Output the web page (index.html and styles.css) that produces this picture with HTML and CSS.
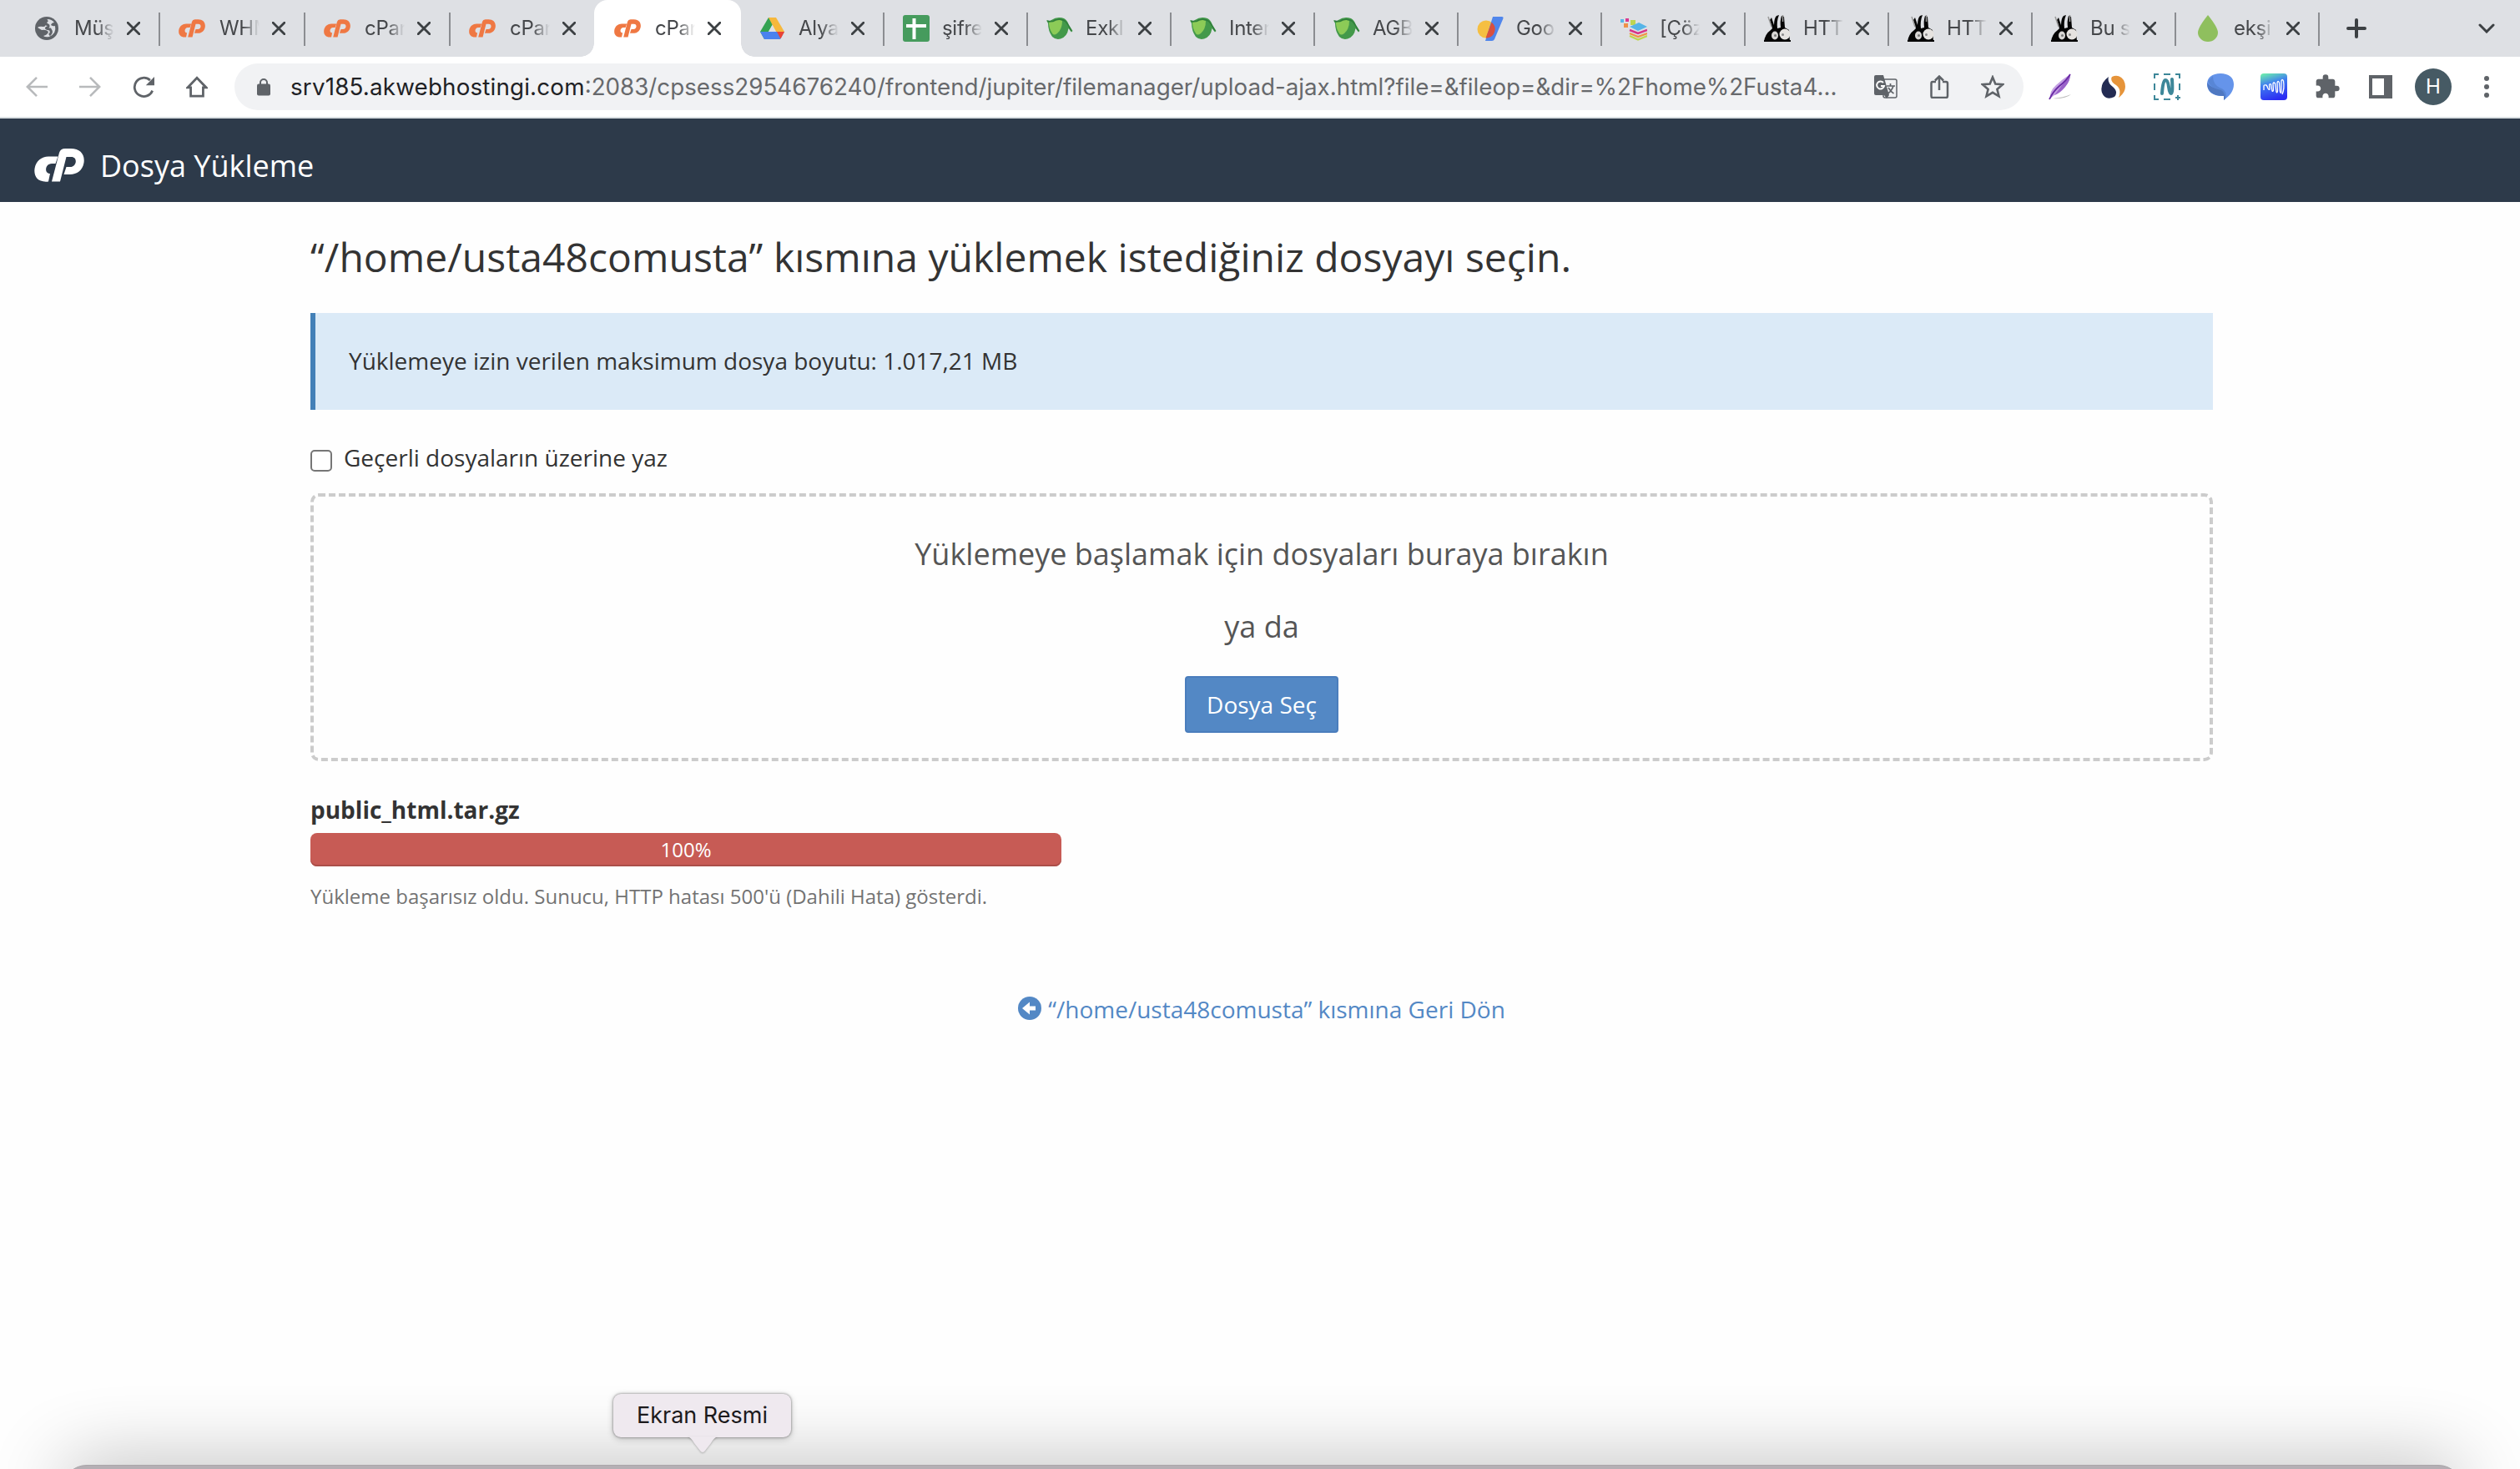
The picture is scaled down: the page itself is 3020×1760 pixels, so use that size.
FILE: index.html
```html
<!DOCTYPE html>
<html lang="tr">
<head>
<meta charset="utf-8">
<title>cPanel - Dosya Yükleme</title>
<link rel="stylesheet" href="styles.css">
</head>
<body>
<svg class="defs" aria-hidden="true">
  <symbol id="cp" viewBox="0 0 60 40">
    <path d="M22 9.500H28.500L25.500 18H21C13 18 11.500 30 19 30L17 39.500C4 41 -1 33 .6 23.500C2 15 9 9.500 17 9.500Z"/>
    <path d="M21 39.500L30 5Q31.500 0 37 0H44C55 0 61 7 59.500 17C58 26 51 31 43 31H35.500L38.500 22H43C51 22 52.500 10 44.500 10H38.500L31 39.500Z"/>
  </symbol>
  <symbol id="x" viewBox="0 0 16 16"><path d="M1.200 1.200 14.800 14.800M14.800 1.200 1.200 14.800" fill="none" stroke="#3c4043" stroke-width="2.800" stroke-linecap="round"/></symbol>
  <symbol id="leaf" viewBox="0 0 32 32">
    <path d="M0 6Q3 8 6 6Q13 1 21 4Q25 6 27 12L31.500 19L30 20.500L26.500 16Q25 26 17 28.500Q11 30 7 26Q2 19 2 10Z" fill="#43994a"/>
    <path d="M3 9Q11 3 19 7Q19 17 13 22Q9 25 7 22Q3 16 3 9Z" fill="#8ccb57"/>
    <path d="M1 7Q6 9 11 6Q17 4 22 7Q25 9 30 19" fill="none" stroke="#2f7d3a" stroke-width="1.500"/>
  </symbol>
  <symbol id="rabbit" viewBox="0 0 32 32">
    <path d="M0 32Q1 23 8 18L10 16L7 6 9 3 12 12Q12 4 15 1L18 0Q15 7 16 16L20 15Q19 7 21 1L24 2 25 15 30 18 31 32Z" fill="#050505"/>
    <path d="M5 2 9 14M22.500 0V8" stroke="#999" stroke-width="1.500"/>
    <ellipse cx="13" cy="24.500" rx="4" ry="5" fill="#d8d6d4"/><ellipse cx="25" cy="23" rx="6.500" ry="6.500" fill="#e6e3e0"/><circle cx="13.500" cy="24.500" r="1.500" fill="#777"/><circle cx="22.500" cy="23.500" r="1.500" fill="#888"/><path d="M0 31H32" stroke="#050505" stroke-width="2"/>
  </symbol>
</svg>

<nav class="tabs">
  <div class="tab"><svg class="fav" viewBox="0 0 32 32"><circle cx="16" cy="16" r="14" fill="#5f6368"/><path d="M17 5Q22 5 25 9Q22 9 21 12Q24 14 26 13Q28 22 19 26Q14 27 12 25Q17 24 18 20Q15 17 10 18L5 15Q7 13 12 14Q15 14 14 11Q13 7 17 5Z" fill="#dee0e4"/><path d="M17 6Q14 8 15 11Q20 12 17 15Q13 16 20 17Q23 21 19 24" fill="none" stroke="#5f6368" stroke-width="3"/></svg><span class="title">Müşt</span><svg class="close"><use href="#x"/></svg></div>
  <div class="tab"><svg class="fav cp"><use href="#cp"/></svg><span class="title">WHM</span><svg class="close"><use href="#x"/></svg></div>
  <div class="tab"><svg class="fav cp"><use href="#cp"/></svg><span class="title">cPan</span><svg class="close"><use href="#x"/></svg></div>
  <div class="tab plain"><svg class="fav cp"><use href="#cp"/></svg><span class="title">cPan</span><svg class="close"><use href="#x"/></svg></div>
  <div class="tab active"><svg class="fav cp"><use href="#cp"/></svg><span class="title">cPan</span><svg class="close"><use href="#x"/></svg></div>
  <div class="tab narrow"><svg class="fav" viewBox="0 0 32 32"><path d="M11 3 20 3 15.500 12 6 29 1 20Z" fill="#34a353"/><path d="M11 3H20L30 20H20Z" fill="#f6b83c"/><path d="M1 20H30L25 29H6Z" fill="#4a82ee"/><path d="M21 20H30L25.500 28.500Z" fill="#ea4335"/><path d="M15.500 12 20 20H11Z" fill="#dee0e4"/></svg><span class="title">Alya</span><svg class="close"><use href="#x"/></svg></div>
  <div class="tab narrow"><svg class="fav" viewBox="0 0 32 32"><rect width="32" height="32" rx="3" fill="#469b5d"/><path d="M4 13H28M13.500 4V29" stroke="#fff" stroke-width="4"/></svg><span class="title">şifre</span><svg class="close"><use href="#x"/></svg></div>
  <div class="tab narrow"><svg class="fav"><use href="#leaf"/></svg><span class="title">Exkl</span><svg class="close"><use href="#x"/></svg></div>
  <div class="tab narrow"><svg class="fav"><use href="#leaf"/></svg><span class="title">Inter</span><svg class="close"><use href="#x"/></svg></div>
  <div class="tab narrow"><svg class="fav"><use href="#leaf"/></svg><span class="title">AGB</span><svg class="close"><use href="#x"/></svg></div>
  <div class="tab narrow"><svg class="fav" viewBox="0 0 32 32"><circle cx="11" cy="17" r="10.500" fill="#f5bf42"/><path d="M19 2H30Q32 2 31.500 4L21 29Q20 31 18 31H10Z" fill="#5086ec"/><path d="M17.500 8.700A10.500 10.500 0 0 1 12 27.500H10.500Z" fill="#d9503f"/></svg><span class="title">Goo</span><svg class="close"><use href="#x"/></svg></div>
  <div class="tab narrow"><svg class="fav" viewBox="0 0 32 32"><path d="M0 5h4v4H0z" fill="#59b6ea"/><path d="M6 4h4v4H6z" fill="#d83a91"/><path d="M12 6h6v6h-6z" fill="#bfd552"/><path d="M4 10h5v5H4z" fill="#ef9249"/><path d="M11 14 22 9 32 14 21 19Z" fill="#56b4e8"/><path d="M11 18 21 22 32 18" fill="none" stroke="#d83489" stroke-width="2.500"/><path d="M11 22 21 26 32 22" fill="none" stroke="#f19245" stroke-width="2.200"/><path d="M11 25 21 29.500 32 25" fill="none" stroke="#bed750" stroke-width="2.200"/></svg><span class="title">[Çöz</span><svg class="close"><use href="#x"/></svg></div>
  <div class="tab narrow"><svg class="fav"><use href="#rabbit"/></svg><span class="title">HTT</span><svg class="close"><use href="#x"/></svg></div>
  <div class="tab narrow"><svg class="fav"><use href="#rabbit"/></svg><span class="title">HTT</span><svg class="close"><use href="#x"/></svg></div>
  <div class="tab narrow"><svg class="fav"><use href="#rabbit"/></svg><span class="title">Bu s</span><svg class="close"><use href="#x"/></svg></div>
  <div class="tab narrow"><svg class="fav" viewBox="0 0 32 32"><path d="M16 0Q28 15 28 21A12 11 0 0 1 4 21Q4 15 16 0Z" fill="#8fbf5e"/></svg><span class="title">ekşi</span><svg class="close"><use href="#x"/></svg></div>
  <svg class="plus" viewBox="0 0 24 24"><path d="M12 2V22M2 12H22" stroke="#3c4043" stroke-width="4" stroke-linecap="round"/></svg>
  <svg class="chev" viewBox="0 0 20 12"><path d="M2 2 10 10 18 2" fill="none" stroke="#3c4043" stroke-width="3" stroke-linecap="round"/></svg>
</nav>

<div class="toolbar">
  <svg class="nav" viewBox="0 0 28 28"><path d="M28 14H2M14 2 2 14 14 26" fill="none" stroke="#b8babc" stroke-width="2.800"/></svg>
  <svg class="nav" viewBox="0 0 28 28"><path d="M0 14H26M14 2 26 14 14 26" fill="none" stroke="#b8babc" stroke-width="2.800"/></svg>
  <svg class="nav" viewBox="0 0 28 28"><path d="M25.500 19A12 12 0 1 1 22.500 5.500" fill="none" stroke="#5f6368" stroke-width="3"/><path d="M28 1V12H17Z" fill="#5f6368"/></svg>
  <svg class="nav" viewBox="0 0 28 28"><path d="M2 15 14 2.500 26 15H22V26H6V15Z" fill="none" stroke="#5f6368" stroke-width="3"/></svg>
  <div class="omnibox">
    <svg class="lock" viewBox="0 0 16 22"><path d="M4 9V6a4 4 0 0 1 8 0V9" fill="none" stroke="#5f6368" stroke-width="2"/><rect y="7.500" width="16" height="14" rx="2" fill="#5f6368"/></svg>
    <span class="url"><b>srv185.akwebhostingi.com</b><span>:2083/cpsess2954676240/frontend/jupiter/filemanager/upload-ajax.html?file=&amp;fileop=&amp;dir=%2Fhome%2Fusta4...</span></span>
    <svg class="act" viewBox="0 0 28 28"><rect x="11" y="5" width="16" height="22" rx="2" fill="none" stroke="#5f6368" stroke-width="1.500"/><path d="M2 0H11L18 24H2Q0 24 0 22V2Q0 0 2 0Z" fill="#5f6368"/><path d="M12 24H18L15 28Z" fill="#5f6368"/><path d="M11 9A4.500 4.500 0 1 0 12 13H8" fill="none" stroke="#fff" stroke-width="2"/><path d="M15 13H25M19.500 10V13M23 13Q21 19 16.500 22M17 15Q20 20 23.500 22" fill="none" stroke="#5f6368" stroke-width="1.700"/></svg>
    <svg class="act" viewBox="0 0 28 28"><path d="M10 8H6Q4.500 8 4.500 10V25Q4.500 27 6 27H22Q24 27 24 25V10Q24 8 22 8H18M14 18V2M9 6.500 14 1.500 19 6.500" fill="none" stroke="#5f6368" stroke-width="2.500"/></svg>
    <svg class="act" viewBox="0 0 28 28"><path d="M14 2.500 17.300 10.500 26 11.200 19.400 16.900 21.500 25.300 14 20.800 6.500 25.300 8.600 16.900 2 11.200 10.700 10.500Z" fill="none" stroke="#5f6368" stroke-width="2.600"/></svg>
  </div>
  <svg class="ext" viewBox="0 0 32 32"><path d="M4 30Q3 21 11 14Q18 7 28 1Q28 9 22 16Q16 24 9 26Z" fill="#c3a0e2"/><path d="M9 26Q16 23 22 16Q28 9 28 1L16 17Z" fill="#9a63c9"/><path d="M3 31Q7 22 15 15Q23 9 28 1" fill="none" stroke="#692aa5" stroke-width="1.800"/><path d="M7 30Q20 29 29 25Q22 31 7 30Z" fill="#bbb"/></svg>
  <svg class="ext" viewBox="0 0 32 32"><path d="M10 4Q8 11 15 16Q22 22 17 28Q6 33 2 23Q-1 12 10 4Z" fill="#232b52"/><path d="M14 4Q22 0 28 8Q34 20 22 29Q26 19 19 14Q11 9 14 4Z" fill="#e6943a"/></svg>
  <svg class="ext" viewBox="0 0 32 32"><path d="M1 6V1H6M12 1H20M26 1H31V6M1 12V20M31 12V20M1 26V31H6M12 31H20M29 26V32M26 29H32" fill="none" stroke="#3d8799" stroke-width="2"/><path d="M10 24Q11 8 14 8Q17 8 18 16Q19 24 21 24Q23 24 22 7" fill="none" stroke="#3d8799" stroke-width="4" stroke-linecap="round"/></svg>
  <svg class="ext" viewBox="0 0 32 32"><path d="M16 0C26 0 32 5 32 13C32 21 27 27 20 32L20 27C8 28 0 22 0 13C0 5 6 0 16 0Z" fill="#6594ea"/><path d="M0 11Q5 18 14 18Q24 20 22 30L20 32V27C6 27 0 21 0 11Z" fill="#4f78c1"/><path d="M7 3Q7 13 15 17Q22 19 23 26L21 30Q22 20 13 19Q4 17 1 9Z" fill="#5886d6"/></svg>
  <svg class="ext" viewBox="0 0 32 32"><defs><linearGradient id="g" x1=".2" y1="0" x2=".5" y2="1"><stop stop-color="#6ae8b0"/><stop offset=".4" stop-color="#3f7df0"/><stop offset="1" stop-color="#2b2cf3"/></linearGradient></defs><rect width="32" height="32" rx="4" fill="url(#g)"/><path d="M4 20V15Q4 13.500 7 14Q8 15 9 18Q10 20 11 19L10.500 14Q11 12 12.500 13L14 21Q15 22 15.500 20L15 12Q16 10 17.500 12L19 22Q20 24 20.500 21L20 11Q21 8 22.500 11L23.500 22Q25 25 25 21L25 9Q26 6 27.500 9Q29 18 26 25" fill="none" stroke="#fff" stroke-width="1.300"/></svg>
  <svg class="ext" viewBox="0 0 24 24"><path d="M20.500 11H19V7c0-1.100-.9-2-2-2h-4V3.500a2.500 2.500 0 0 0-5 0V5H4c-1.100 0-1.990.9-1.990 2v3.800H3.500c1.490 0 2.700 1.210 2.700 2.700s-1.210 2.700-2.700 2.700H2V20c0 1.100.9 2 2 2h3.800v-1.500c0-1.490 1.210-2.700 2.700-2.700s2.700 1.210 2.700 2.700V22H17c1.100 0 2-.9 2-2v-4h1.500a2.500 2.500 0 0 0 0-5z" fill="#5f6368"/></svg>
  <svg class="ext" viewBox="0 0 32 32"><path d="M2 2H30V30H2ZM6 6V26H20V6Z" fill="#5f6368" fill-rule="evenodd"/></svg>
  <span class="avatar">H</span>
  <svg class="more" viewBox="0 0 6 26"><circle cx="3" cy="3" r="3"/><circle cx="3" cy="13" r="3"/><circle cx="3" cy="23" r="3"/></svg>
</div>

<header class="masthead"><svg class="logo"><use href="#cp"/></svg><span>Dosya Yükleme</span></header>

<main>
  <h1>“/home/usta48comusta” kısmına yüklemek istediğiniz dosyayı seçin.</h1>
  <div class="info">Yüklemeye izin verilen maksimum dosya boyutu: 1.017,21 MB</div>
  <label class="overwrite"><i class="box"></i><span>Geçerli dosyaların üzerine yaz</span></label>
  <section class="drop">
    <p>Yüklemeye başlamak için dosyaları buraya bırakın</p>
    <p>ya da</p>
    <button>Dosya Seç</button>
  </section>
  <div class="file">public_html.tar.gz</div>
  <div class="progress">100%</div>
  <div class="status">Yükleme başarısız oldu. Sunucu, HTTP hatası 500'ü (Dahili Hata) gösterdi.</div>
  <a class="back"><svg viewBox="0 0 28 28"><circle cx="14" cy="14" r="14" fill="#5388c5"/><path d="M5 14 14 6.500V11.500H21V16.500H14V21.500Z" fill="#fff"/></svg><span>“/home/usta48comusta” kısmına Geri Dön</span></a>
</main>

<div class="dock"></div>
<div class="tip">Ekran Resmi<svg viewBox="0 0 36 20"><path d="M0 0H36Q32 1 28 8L21 17Q18 21 15 17L8 8Q4 1 0 0Z"/></svg></div>
</body>
</html>
```
FILE: styles.css
```css
* { box-sizing: border-box; }
body {
  margin: 0;
  width: 3020px;
  height: 1760px;
  overflow: hidden;
  position: relative;
  background: #fefefe;
  color: #333;
  font: 28px/40px "Open Sans", "Noto Sans", sans-serif;
}
svg { display: block; flex: none; }
.defs { position: absolute; width: 0; height: 0; }

/* Tab strip */
.tabs {
  display: flex;
  height: 68px;
  padding-left: 18px;
  background: #dee0e4;
  font: 24px/32px Inter, "Liberation Sans", sans-serif;
  letter-spacing: -0.3px;
  color: #45474a;
}
.tab {
  display: flex;
  align-items: center;
  position: relative;
  width: 174px;
  height: 68px;
  padding-left: 22px;
}
.tab.narrow { width: 172px; }
.tab::after {
  content: "";
  position: absolute;
  right: 0;
  top: 15px;
  width: 2px;
  height: 40px;
  background: #8b8d91;
}
.tab.plain::after { display: none; }
.tab.active {
  width: 176px;
  margin-left: -2px;
  padding-left: 24px;
  background: #fff;
  border-radius: 16px 16px 0 0;
}
.tab.active::before,
.tab.active::after {
  content: "";
  position: absolute;
  top: auto;
  bottom: 0;
  width: 16px;
  height: 16px;
}
.tab.active::before { left: -16px; background: radial-gradient(circle at 0 0, transparent 15.500px, #fff 16px); }
.tab.active::after { right: -16px; background: radial-gradient(circle at 100% 0, transparent 15.500px, #fff 16px); }
.fav { width: 32px; height: 32px; }
.fav.cp { fill: #ef7843; }
.title {
  width: 49px;
  margin-left: 17px;
  white-space: nowrap;
  -webkit-mask: linear-gradient(90deg, #000 55%, transparent 98%);
  mask: linear-gradient(90deg, #000 55%, transparent 98%);
}
.close { width: 16px; height: 16px; margin-left: 14px; }
.narrow .title { margin-left: 15px; }
.plus { width: 24px; height: 24px; margin: 22px 0 0 32px; }
.chev { width: 20px; height: 12px; margin: 28px 30px 0 auto; }

/* Address bar */
.toolbar {
  display: flex;
  align-items: center;
  height: 74px;
  padding-left: 31px;
  background: #fff;
  border-bottom: 2px solid #dadfe3;
}
.nav { width: 26px; height: 26px; margin-right: 38px; }
.omnibox {
  display: flex;
  align-items: center;
  width: 2144px;
  height: 56px;
  margin: 0 28px 0 -6px;
  padding: 0 22px 0 27px;
  border-radius: 28px;
  background: #f1f2f4;
}
.lock { width: 16px; height: 22px; }
.url {
  width: 1878px;
  margin-left: 24px;
  white-space: nowrap;
  font: 27.750px/40px Inter, "Liberation Sans", sans-serif;
  color: #67696c;
}
.url b { font-weight: 400; letter-spacing: 0.18px; color: #202124; }
.act { width: 28px; height: 28px; margin-left: 36px; }
.url + .act { margin-left: 20px; }
.ext { width: 32px; height: 32px; margin-right: 32px; }
.avatar {
  width: 44px;
  height: 44px;
  margin-left: -7px;
  border-radius: 50%;
  background: #465a64;
  color: #fff;
  text-align: center;
  font: 24px/44px Inter, sans-serif;
}
.more { width: 6px; height: 26px; margin-left: 39px; fill: #5f6368; }

/* Application header */
.masthead {
  display: flex;
  align-items: center;
  height: 100px;
  padding: 12px 0 0 41px;
  background: #2d3a4a;
  color: #fff;
  font-size: 36px;
}
.masthead span { margin: 1px 0 0 19px; }
.logo { width: 60px; height: 40px; fill: #fff; }

/* Upload form */
main { width: 2280px; margin-left: 372px; }
h1 {
  margin: 0;
  padding-top: 33px;
  font-size: 48px;
  line-height: 66px;
  font-weight: 400;
  letter-spacing: 0.03px;
}
.info {
  height: 116px;
  margin-top: 34px;
  padding: 37px 40px;
  border-left: 6px solid #4380b7;
  background: #dbeaf7;
}
.overwrite { display: flex; height: 40px; margin-top: 37px; }
.box { width: 26px; height: 26px; margin: 11px 14px 0 0; border: 2px solid #767676; border-radius: 5px; background: #fff; }
.drop {
  display: flex;
  flex-direction: column;
  align-items: center;
  height: 321px;
  margin-top: 23px;
  padding-top: 44px;
  border: 4px dashed #ccc;
  border-radius: 10px;
  color: #555;
}
.drop p { margin: 0 0 37px; font-size: 36px; line-height: 50px; }
.drop p + p { margin-bottom: 34px; }
.drop button {
  width: 184px;
  height: 68px;
  padding: 0;
  border: 2px solid #4a7dbc;
  border-radius: 4px;
  background: #5388c5;
  color: #fff;
  font: inherit;
}
.file { margin-top: 38px; font-weight: 700; }
.progress {
  width: 900px;
  height: 40px;
  margin-top: 8px;
  border-radius: 8px;
  background: #c75b55;
  box-shadow: inset 0 -2px #ab4e49;
  color: #fff;
  text-align: center;
  font-size: 24px;
}
.status { margin-top: 16px; font-size: 24px; color: #737373; }
.back { display: flex; justify-content: center; margin-top: 95px; color: #5388c5; }
.back svg { width: 28px; height: 28px; margin: 5px 8px 0 0; }

/* Desktop dock edge and its label */
.dock {
  position: absolute;
  left: 74px;
  right: 68px;
  top: 1755px;
  height: 60px;
  border: 1px solid #aaa6aa;
  border-radius: 30px;
  background: #b5afb4;
  box-shadow: 0 0 90px rgba(0, 0, 0, .3);
}
.tip {
  position: absolute;
  left: 735px;
  top: 1670px;
  width: 213px;
  height: 52px;
  border-radius: 9px;
  background: #efe9ef;
  box-shadow: 0 0 3px rgba(0, 0, 0, .5), 0 2px 8px rgba(0, 0, 0, .2);
  color: #1c1a1c;
  text-align: center;
  font: 27px/52px Inter, sans-serif;
}
.tip svg { position: absolute; left: 89px; top: 51px; width: 36px; height: 20px; fill: #efe9ef; filter: drop-shadow(0 1px 1px rgba(0, 0, 0, .25)); }
```
